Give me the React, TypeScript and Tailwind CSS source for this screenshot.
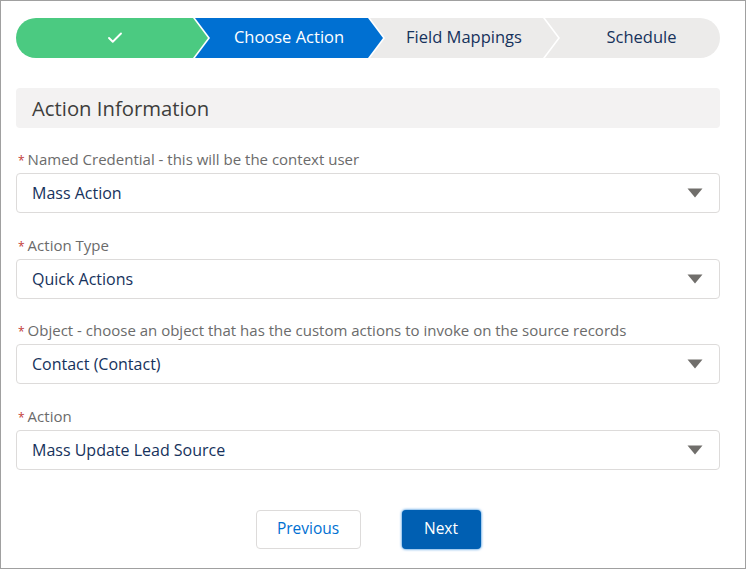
import { Check } from "lucide-react";

const font = { fontFamily: '"Open Sans", "Noto Sans", sans-serif' };

const steps = [
  { key: "done", label: "", w: "w-[192px]", clip: "[clip-path:polygon(0_0,calc(100%_-_15px)_0,100%_50%,calc(100%_-_15px)_100%,0_100%)]", tone: "bg-[#4bca81] text-white" },
  { key: "action", label: "Choose Action", w: "w-[188px] -ml-[13px]", clip: "[clip-path:polygon(0_0,calc(100%_-_15px)_0,100%_50%,calc(100%_-_15px)_100%,0_100%,15px_50%)]", tone: "bg-[#0070d2] text-white" },
  { key: "fields", label: "Field Mappings", w: "w-[188px] -ml-[13px]", clip: "[clip-path:polygon(0_0,calc(100%_-_15px)_0,100%_50%,calc(100%_-_15px)_100%,0_100%,15px_50%)]", tone: "bg-[#ecebea] text-[#16325c]" },
  { key: "schedule", label: "Schedule", w: "w-[175px] -ml-[13px] pl-[18px]", clip: "[clip-path:polygon(0_0,100%_0,100%_100%,0_100%,15px_50%)]", tone: "bg-[#ecebea] text-[#16325c]" },
];

const fields = [
  { label: "Named Credential - this will be the context user", value: "Mass Action" },
  { label: "Action Type", value: "Quick Actions" },
  { label: "Object - choose an object that has the custom actions to invoke on the source records", value: "Contact (Contact)" },
  { label: "Action", value: "Mass Update Lead Source" },
];

function PathBar() {
  return (
    <div className="flex h-10 rounded-full overflow-hidden">
      {steps.map((s) => (
        <div
          key={s.key}
          className={`${s.w} ${s.clip} ${s.tone} shrink-0 flex items-center justify-center text-[16.5px] pb-[1px]`}
        >
          {s.key === "done" ? <Check className="w-[18px] h-[18px] ml-[6px]" strokeWidth={2.5} /> : s.label}
        </div>
      ))}
    </div>
  );
}

function SelectField({ label, value }: { label: string; value: string }) {
  return (
    <div>
      <div className="flex items-baseline text-[15px] leading-5 text-[#6b6b6b] pl-[2px]">
        <span className="text-[#c23934] text-[12px] mr-[3px]">*</span>
        {label}
      </div>
      <div className="mt-[2px] h-10 flex items-center justify-between border border-[#dddbda] rounded-[4px] pl-[15px] pr-[16px] text-[16px] text-[#16325c]">
        <span>{value}</span>
        <svg width="16" height="10" viewBox="0 0 16 10">
          <path d="M0.5 0.5 L15.5 0.5 L8 9.5 Z" fill="#706e6b" />
        </svg>
      </div>
    </div>
  );
}

export default function App() {
  return (
    <div style={font} className="w-[746px] h-[569px] border border-[#a0a0a0] bg-white">
      <div className="pt-[17px] pl-[15px] pr-[25px]">
        <PathBar />
        <div className="mt-[30px] h-10 bg-[#f3f2f2] rounded-[4px] flex items-center px-4 text-[20.3px] text-[#3e3e3c]">
          Action Information
        </div>
        <div className="mt-[21px] flex flex-col gap-[21.5px]">
          {fields.map((f) => (
            <SelectField key={f.label} label={f.label} value={f.value} />
          ))}
        </div>
        <div className="mt-[40px] flex justify-center gap-[41px]">
          <button className="w-[105px] h-[39px] border border-[#dddbda] rounded-[4px] text-[#0070d2] text-[15.5px] bg-white">
            Previous
          </button>
          <button className="w-[79px] h-[39px] rounded-[4px] bg-[#005fb2] text-white text-[15.5px] shadow-[0_0_3px_#0070d2]">
            Next
          </button>
        </div>
      </div>
    </div>
  );
}
